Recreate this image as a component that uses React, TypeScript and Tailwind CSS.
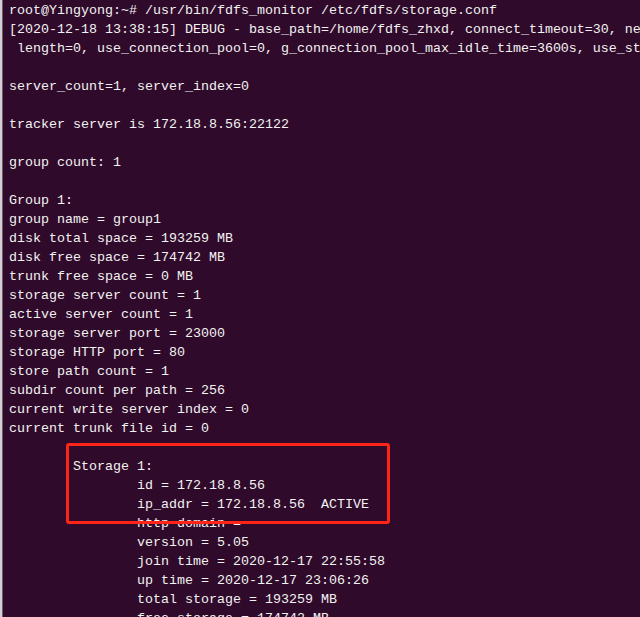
const lines: string[] = [
  "root@Yingyong:~# /usr/bin/fdfs_monitor /etc/fdfs/storage.conf",
  "[2020-12-18 13:38:15] DEBUG - base_path=/home/fdfs_zhxd, connect_timeout=30, network_timeout=60, tracker_server_count=1",
  " length=0, use_connection_pool=0, g_connection_pool_max_idle_time=3600s, use_storage_id=0, storage server id count: 0",
  "",
  "server_count=1, server_index=0",
  "",
  "tracker server is 172.18.8.56:22122",
  "",
  "group count: 1",
  "",
  "Group 1:",
  "group name = group1",
  "disk total space = 193259 MB",
  "disk free space = 174742 MB",
  "trunk free space = 0 MB",
  "storage server count = 1",
  "active server count = 1",
  "storage server port = 23000",
  "storage HTTP port = 80",
  "store path count = 1",
  "subdir count per path = 256",
  "current write server index = 0",
  "current trunk file id = 0",
  "",
  "        Storage 1:",
  "                id = 172.18.8.56",
  "                ip_addr = 172.18.8.56  ACTIVE",
  "                http domain = ",
  "                version = 5.05",
  "                join time = 2020-12-17 22:55:58",
  "                up time = 2020-12-17 23:06:26",
  "                total storage = 193259 MB",
  "                free storage = 174742 MB",
];

export default function App() {
  return (
    <div className="flex h-[617px] w-[640px] overflow-hidden bg-[#300a2a]">
      {/* window edge */}
      <div className="w-[2px] shrink-0 bg-[#d4d0d4]" />
      <div className="w-px shrink-0 bg-[#6e5a68]" />

      {/* terminal body */}
      <div className="relative flex-1 overflow-hidden pl-[6px] pt-px">
        <pre className="font-['Liberation_Mono',monospace] text-[13.33px] leading-[19px] text-[#f2f2f2]">
          {lines.map((l, i) => (
            <div key={i} className="h-[19px] whitespace-pre">
              {l}
            </div>
          ))}
        </pre>

        {/* highlight box */}
        <div className="absolute left-[63px] top-[443px] h-[81px] w-[324px] rounded-[3px] border-[3px] border-[#ff2418]" />
      </div>
    </div>
  );
}
